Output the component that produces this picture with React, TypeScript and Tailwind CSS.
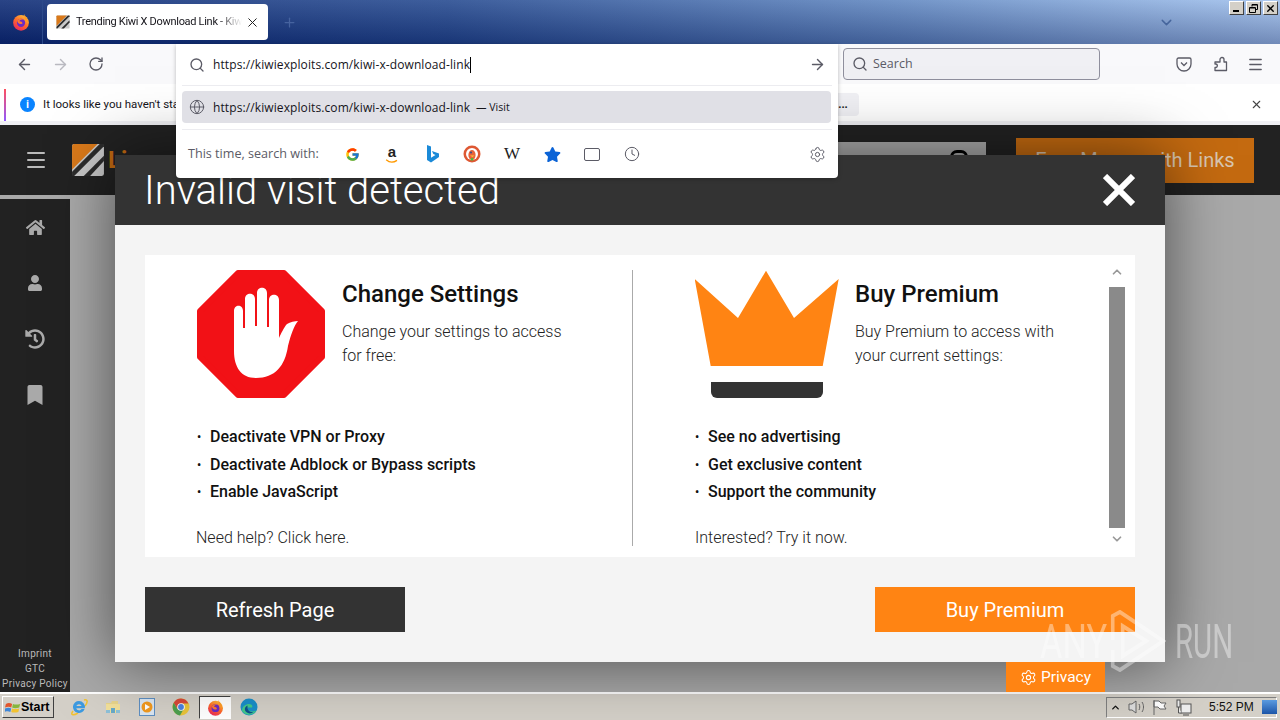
import React from 'react';
import {
  ArrowLeft,
  ArrowRight,
  ChevronDown,
  ChevronUp,
  Clock,
  Globe,
  Menu,
  Plus,
  RotateCw,
  Search,
  Settings,
  X,
} from 'lucide-react';
import { FaBookmark, FaHistory, FaHome, FaUser, FaStar } from 'react-icons/fa';
import { FcGoogle } from 'react-icons/fc';

const uiFont = "font-['Open_Sans','Noto_Sans',sans-serif]";

const FirefoxLogo = ({ size = 18 }: { size?: number }) => (
  <svg width={size} height={size} viewBox="0 0 24 24">
    <defs>
      <linearGradient id="ffg" x1="0.8" y1="0" x2="0.2" y2="1">
        <stop offset="0" stopColor="#ffc53a" />
        <stop offset="0.5" stopColor="#ff6a2a" />
        <stop offset="1" stopColor="#e8215f" />
      </linearGradient>
    </defs>
    <circle cx="12" cy="13" r="10.5" fill="url(#ffg)" />
    <path d="M16 1c1 3 3 4 5 8l1 5-5-4z" fill="#ff9a26" />
    <circle cx="12" cy="13" r="5.5" fill="#6a2bc4" />
    <path d="M7 10c2-3 7-3 9-1-3-1-6 0-6 2 2 0 4 1 4 3-3 2-7 0-7-4z" fill="#ff7a2e" />
  </svg>
);

const KiwiLogo = ({ size = 14 }: { size?: number }) => (
  <svg width={size} height={size} viewBox="0 0 32 32">
    <rect x="1" y="1" width="30" height="30" rx="2" fill="#c9c9c9" />
    <path d="M1 3a2 2 0 0 1 2-2h22L1 25z" fill="#d9791a" />
    <path d="M1 27 27 1h4v2L3 31H1z" fill="#2c2c2c" />
    <path d="M12 31 31 12v5L18 31z" fill="#2c2c2c" />
  </svg>
);

const Bing = () => (
  <svg width="16" height="20" viewBox="0 0 16 20">
    <path d="M3 1l4 1.500v11.200l4.500-2.600-2.200-1L8 7l7 2.500V13L7 18.500 3 16z" fill="#1b8ad8" />
  </svg>
);

const Duck = () => (
  <svg width="18" height="18" viewBox="0 0 18 18">
    <circle cx="9" cy="9" r="8.500" fill="#de5833" />
    <circle cx="9" cy="9" r="6" fill="#fff" />
    <ellipse cx="9" cy="10" rx="3.600" ry="5" fill="#e8623a" />
    <circle cx="8" cy="7.500" r="1" fill="#2d4f8e" />
    <path d="M7 10.500h4.500L9.500 12z" fill="#fc3" />
    <path d="M8 13l2 0 .5 2.500h-3z" fill="#4cba3c" />
  </svg>
);

const Amazon = () => (
  <span className="relative flex h-[20px] w-[16px] flex-col items-center">
    <span className="font-['Liberation_Sans',sans-serif] text-[15px] leading-[15px] font-bold text-[#222]">a</span>
    <svg width="16" height="6" viewBox="0 0 16 6">
      <path d="M1 1c4 3.400 9 3.400 13 .6" stroke="#f90" strokeWidth="1.600" fill="none" />
    </svg>
  </span>
);

const IeIcon = () => (
  <svg width="18" height="18" viewBox="0 0 18 18">
    <path d="M3 13C0 17 3 18 8 15M14 2c4-1 4 2 1 6" stroke="#f2c230" strokeWidth="1.500" fill="none" />
    <path d="M9 3a6 6 0 1 0 5.600 8h-3a3 3 0 0 1-5.400-.8h8.600A6 6 0 0 0 9 3zM6.300 8a3 3 0 0 1 5.400 0z" fill="#3d9ae0" />
  </svg>
);

const FolderIcon = () => (
  <svg width="16" height="16" viewBox="0 0 16 16">
    <path d="M1 4h5l1-2h6v3H1z" fill="#e8d48a" />
    <rect x="1" y="5" width="14" height="9" fill="#f2e09a" />
    <path d="M6 14V9h4v5z" fill="#67a9c9" />
    <path d="M1 11h4v3H1zM11 11h4v3h-4z" fill="#8cc0d8" />
  </svg>
);

const MediaIcon = () => (
  <svg width="16" height="18" viewBox="0 0 16 18">
    <rect x="0.500" y="0.500" width="15" height="17" fill="#dbe7f3" stroke="#5e8fc2" />
    <circle cx="8" cy="9" r="5.500" fill="#f29a1f" />
    <path d="M6 6l5 3-5 3z" fill="#fff" />
  </svg>
);

const ChromeIcon = () => (
  <svg width="18" height="18" viewBox="0 0 18 18">
    <circle cx="9" cy="9" r="8.500" fill="#e9c43a" />
    <path d="M9 .5A8.500 8.500 0 0 0 1.700 4.800L5.500 11 9 5.500h7.400A8.500 8.500 0 0 0 9 .5z" fill="#d8483a" />
    <path d="M1.700 4.800A8.500 8.500 0 0 0 8 17.400L11.700 11H5.500z" fill="#4d9f4f" />
    <circle cx="9" cy="9" r="3.800" fill="#fff" />
    <circle cx="9" cy="9" r="2.900" fill="#4a82e0" />
  </svg>
);

const EdgeIcon = () => (
  <svg width="18" height="18" viewBox="0 0 18 18">
    <circle cx="9" cy="9" r="8.500" fill="#1a8fc9" />
    <path d="M2 13C2 8 6 6 9 6c3 0 4 2 3 3.400H7.500C7 12.500 11 15 16.400 12.600A8.500 8.500 0 0 1 2 13z" fill="#43c98a" />
    <path d="M7.500 9.400c0 3 3 5.500 6 4.400-3 3-8 1.400-8.600-2-.3-2 .8-3.600 2.600-4.400z" fill="#0c4f8e" />
  </svg>
);

const WinFlag = () => (
  <svg width="16" height="15" viewBox="0 0 18 16" className="shrink-0">
    <path d="M1 4c3-2 5-1 7 0L7 8C5 7 3 7 0 8z" fill="#e2562d" />
    <path d="M9 4c2 1 5 1 8 0l-1 4c-3 1-6 1-8 0z" fill="#86b63c" />
    <path d="M0 9c3-1 5-1 7 0l-1 4c-2-1-4-1-7 0z" fill="#3d86d8" />
    <path d="M8 9c2 1 5 1 8 0l-1 4c-3 1-6 1-8 0z" fill="#f2c230" />
  </svg>
);

const WinButton = ({ kind }: { kind: 'min' | 'max' | 'close' }) => (
  <div className="flex h-[14px] w-[15px] items-center justify-center border border-t-white border-l-white border-r-[#404040] border-b-[#404040] bg-[#d4d0c8]">
    {kind === 'min' && <div className="mt-[6px] mr-[2px] h-[2px] w-[6px] bg-black" />}
    {kind === 'max' && (
      <svg width="9" height="9" viewBox="0 0 9 9" fill="none" stroke="#000">
        <path d="M3 2.500V.5h5.500v5H6.500M.5 3.500h6v5h-6z" />
        <path d="M3 1h5M1 4h5" />
      </svg>
    )}
    {kind === 'close' && <X size={11} strokeWidth={3} color="#000" />}
  </div>
);

const HandSign = () => (
  <svg width="128" height="128" viewBox="197 270 128 128">
    <path d="M238 273h46l38 38v46l-38 38h-46l-38-38v-46z" fill="#f21116" stroke="#f21116" strokeWidth="6" strokeLinejoin="round" />
    <path
      d="M234 311c0-7 9-7 9 0v17h2v-29c0-7 10-7 10 0v27h2v-33c0-7 10-7 10 0v34h2v-27c0-7 10-7 10 0v38c2-4 5-11 8-14 3-2 8-3 11-3-4 5-7 13-10 25-3 20-13 32-32 32-15 0-22-11-22-27z"
      fill="#fff"
    />
  </svg>
);

const Crown = () => (
  <svg width="144" height="128" viewBox="695 270 144 128">
    <path d="M694.700 279L738 318 766 270.700 794 318 838.700 279 822.700 366H710.700z" fill="#ff8413" />
    <path d="M711 382h112v10a6 6 0 0 1-6 6H717a6 6 0 0 1-6-6z" fill="#333" />
  </svg>
);

const SideIcon = ({ children }: { children: React.ReactNode }) => (
  <div className="flex h-[56px] items-center justify-center text-[#aaa]">{children}</div>
);

const Bullet = ({ children }: { children: React.ReactNode }) => (
  <li className="flex h-[27.5px] items-center text-[16px] font-medium text-[#111]">
    <span className="w-[13px] text-[12px]">•</span>
    {children}
  </li>
);

const UrlText = () => (
  <span className="text-[12px] tracking-[0.1px] whitespace-nowrap text-[#15141a]">https://kiwiexploits.com/kiwi-x-download-link</span>
);

function PageBehind() {
  return (
    <div className="relative flex min-h-0 flex-1 flex-col bg-[#a9a9a9] font-['Roboto',sans-serif]">
      <div className="flex h-[70px] shrink-0 items-center bg-[#222]">
        <div className="flex w-[71px] justify-center">
          <Menu size={24} color="#bbb" />
        </div>
        <KiwiLogo size={34} />
        <span className="ml-[3px] text-[24px] font-bold text-[#c46a10]">Li</span>
        <div className="mb-[20px] ml-auto flex h-[17px] w-[148px] justify-end bg-[#aaa] pr-[18px]">
          <div className="mt-[8px] h-[14px] w-[18px] rounded-full border-[3px] border-black" />
        </div>
        <div className="mr-[26px] ml-[30px] flex h-[45px] w-[238px] items-center justify-center bg-[#c46a10] text-[20px] text-[#d9c6b0]">
          Earn Money with Links
        </div>
      </div>
      <div className="mt-[4px] flex min-h-0 flex-1">
        <div className="flex w-[70px] flex-col bg-[#222]">
          <SideIcon>
            <FaHome size={19} />
          </SideIcon>
          <SideIcon>
            <FaUser size={16} />
          </SideIcon>
          <SideIcon>
            <FaHistory size={20} />
          </SideIcon>
          <SideIcon>
            <FaBookmark size={20} />
          </SideIcon>
          <div className="mt-auto flex flex-col items-center pb-[1px] text-[10px] leading-[15px] tracking-[0.3px] whitespace-nowrap text-[#bbb]">
            <span>Imprint</span>
            <span>GTC</span>
            <span>Privacy Policy</span>
          </div>
        </div>
      </div>

      {/* modal over the page */}
      <div className="absolute top-[30px] left-[115px] flex h-[507px] w-[1050px] flex-col bg-[#f4f4f4] shadow-[0_0_60px_rgba(0,0,0,0.55)]">
        <div className="flex h-[70px] shrink-0 items-center justify-between bg-[#333] px-[30px]">
          <span className="mt-[2px] -ml-[1px] text-[40px] font-light text-white">Invalid visit detected</span>
          <svg width="32" height="32" viewBox="0 0 32 32" stroke="#fff" strokeWidth="6">
            <path d="M2 2l28 28M30 2L2 30" />
          </svg>
        </div>
        <div className="mx-[30px] mt-[30px] flex h-[302px] bg-white pt-[15px]">
          <div className="h-[276px] w-[488px] border-r border-[#aaa] pl-[52px]">
            <div className="flex h-[128px] gap-[17px]">
              <HandSign />
              <div className="pt-[6px]">
                <div className="text-[24px] leading-[36px] font-medium text-[#111]">Change Settings</div>
                <p className="mt-[8px] w-[240px] text-[16px] leading-[24px] font-light text-[#222]">
                  Change your settings to access for free:
                </p>
              </div>
            </div>
            <ul className="mt-[25.5px]">
              <Bullet>Deactivate VPN or Proxy</Bullet>
              <Bullet>Deactivate Adblock or Bypass scripts</Bullet>
              <Bullet>Enable JavaScript</Bullet>
            </ul>
            <p className="mt-[19.5px] -ml-[1px] text-[16px] leading-[24px] font-light text-[#222]">Need help? Click here.</p>
          </div>
          <div className="h-[276px] flex-1 pl-[62px]">
            <div className="flex h-[128px] gap-[16px]">
              <Crown />
              <div className="pt-[6px]">
                <div className="text-[24px] leading-[36px] font-medium text-[#111]">Buy Premium</div>
                <p className="mt-[8px] w-[220px] text-[16px] leading-[24px] font-light text-[#222]">
                  Buy Premium to access with your current settings:
                </p>
              </div>
            </div>
            <ul className="mt-[25.5px]">
              <Bullet>See no advertising</Bullet>
              <Bullet>Get exclusive content</Bullet>
              <Bullet>Support the community</Bullet>
            </ul>
            <p className="mt-[19.5px] text-[16px] leading-[24px] font-light text-[#222]">Interested? Try it now.</p>
          </div>
          <div className="mr-[10px] flex h-[280px] w-[16px] flex-col items-center">
            <ChevronUp size={14} strokeWidth={3} color="#999" className="-mt-[5px] mb-[8px]" />
            <div className="h-[241px] w-[16px] shrink-0 bg-[#8a8a8a]" />
            <ChevronDown size={14} strokeWidth={3} color="#999" className="mt-[4px]" />
          </div>
        </div>
        <div className="mx-[30px] mt-[30px] flex justify-between">
          <div className="flex h-[45px] w-[260px] items-center justify-center bg-[#333] text-[20px] text-white">Refresh Page</div>
          <div className="flex h-[45px] w-[260px] items-center justify-center bg-[#ff8413] text-[20px] text-white">Buy Premium</div>
        </div>
      </div>

      <div className="absolute top-[537px] left-[1006px] flex h-[30px] w-[99px] items-center justify-center gap-[4px] bg-[#ff8413] pt-[1px] text-[15.5px] text-white">
        <Settings size={17} strokeWidth={1.5} />
        Privacy
      </div>
    </div>
  );
}

export default function App() {
  return (
    <div className={`relative flex h-[720px] w-[1280px] flex-col overflow-hidden bg-white ${uiFont}`}>
      {/* title bar */}
      <div className="flex h-[44px] shrink-0 items-center bg-[linear-gradient(180deg,rgba(255,255,255,0.12),rgba(0,10,60,0.3)),linear-gradient(90deg,#0c2a75,#23488f_35%,#5f86c0_70%,#a2c2ee)]">
        <div className="flex h-full w-[43px] shrink-0 items-center justify-center border-r border-[#2d4a8a]">
          <FirefoxLogo size={18} />
        </div>
        <div className="ml-[4px] flex h-[36px] w-[221px] shrink-0 items-center rounded-[4px] bg-white px-[9px]">
          <KiwiLogo size={14} />
          <span className="ml-[6px] w-[166px] overflow-hidden font-['Roboto',sans-serif] text-[11px] tracking-[-0.3px] whitespace-nowrap text-[#15141a] [mask-image:linear-gradient(90deg,#000_85%,transparent)]">
            Trending Kiwi X Download Link - Kiwi
          </span>
          <X size={15} strokeWidth={1.6} color="#222" className="mr-[-1px] ml-auto" />
        </div>
        <Plus size={15} color="#46639f" className="ml-[14px]" />
        <ChevronDown size={17} color="#46659c" className="ml-[861px]" />
        <div className="mb-[28px] ml-auto flex gap-[2px] pr-[2px]">
          <WinButton kind="min" />
          <WinButton kind="max" />
          <WinButton kind="close" />
        </div>
      </div>

      {/* toolbar */}
      <div className="flex h-[40px] shrink-0 items-center bg-[#f9f9fb] pr-[15px]">
        <ArrowLeft size={17} color="#5b5b66" className="ml-[16px]" />
        <ArrowRight size={17} color="#b9b9c0" className="ml-[19px]" />
        <RotateCw size={16} color="#5b5b66" className="ml-[19px]" />
        <div className="ml-[739px] flex h-[32px] w-[257px] items-center rounded-[4px] border border-[#8f8f9d] bg-[#f0f0f4] pl-[8px]">
          <Search size={16} color="#5b5b66" />
          <span className="ml-[5px] pt-[1px] text-[12.5px] text-[#5b5b66]">Search</span>
        </div>
        <svg width="16" height="16" viewBox="0 0 16 16" fill="none" stroke="#5b5b66" strokeWidth="1.300" className="ml-[76px]">
          <path d="M2.500 2h11c.8 0 1.500.7 1.500 1.500V8a7 7 0 0 1-14 0V3.500C1 2.700 1.700 2 2.500 2z" />
          <path d="M5 6.500l3 3 3-3" />
        </svg>
        <svg width="16" height="16" viewBox="0 0 16 16" fill="none" stroke="#5b5b66" strokeWidth="1.300" strokeLinejoin="round" className="ml-[20px]">
          <path d="M8 6V3.500a2 2 0 0 1 4 0V6h2.500v8.500H3v-3h1a1.800 1.800 0 0 0 0-3.500H3V6z" />
        </svg>
        <Menu size={17} color="#5b5b66" className="ml-[19px]" />
      </div>

      {/* notification bar */}
      <div className="mt-[4px] ml-[4px] flex h-[33px] w-[1271px] shrink-0 items-center rounded-[4px] bg-white">
        <div className="h-[32px] w-[2px] bg-[linear-gradient(180deg,#ff4f5e,#9059ff)]" />
        <div className="ml-[14px] flex h-[15px] w-[15px] items-center justify-center rounded-full bg-[#0a84ff] text-[10px] font-bold text-white">i</div>
        <span className="ml-[8px] font-['Roboto',sans-serif] text-[11.5px] whitespace-nowrap text-[#15141a]">It looks like you haven't sta</span>
        <div className="ml-auto flex h-[23px] w-[32px] items-center justify-center rounded-[4px] bg-[#f0f0f4] text-[11px] font-bold text-[#222]">
          ...
        </div>
        <X size={13} color="#444" className="mr-[12px] ml-[391px]" />
      </div>
      <div className="h-[4px] shrink-0 bg-[#f0f0f4]" />

      <PageBehind />

      {/* taskbar */}
      <div className="flex h-[28px] shrink-0 items-center border-t-2 border-white bg-[#d4d0c8] font-['Liberation_Sans',sans-serif]">
        <div className="ml-[2px] flex h-[22px] w-[52px] items-center border border-t-white border-l-white border-r-[#404040] border-b-[#404040] pl-[2px] text-[12.5px] font-bold text-black">
          <WinFlag />
          <span>Start</span>
        </div>
        <div className="ml-[8px] flex items-center">
          <div className="flex w-[34px] justify-center"><IeIcon /></div>
          <div className="flex w-[34px] justify-center"><FolderIcon /></div>
          <div className="flex w-[34px] justify-center"><MediaIcon /></div>
          <div className="flex w-[34px] justify-center"><ChromeIcon /></div>
          <div className="mx-[1px] flex h-[23px] w-[32px] items-center justify-center border border-t-[#404040] border-l-[#404040] border-r-white border-b-white bg-white">
            <FirefoxLogo size={17} />
          </div>
          <div className="flex w-[34px] justify-center"><EdgeIcon /></div>
        </div>
        <div className="mr-[3px] ml-auto flex h-[21px] w-[171px] items-center border border-t-[#808080] border-l-[#808080] border-r-white border-b-white pl-[3px] text-[12px] whitespace-nowrap text-[#111]">
          <ChevronUp size={11} strokeWidth={3} color="#111" className="shrink-0" />
          <svg width="18" height="16" viewBox="0 0 18 16" className="ml-[7px] shrink-0" fill="none" stroke="#666">
            <path d="M1 5h3l4-3v12l-4-3H1z" fill="#ddd" />
            <path d="M11 5c1 2 1 4 0 6M14 3c2 3 2 7 0 10" />
          </svg>
          <svg width="16" height="17" viewBox="0 0 16 17" className="ml-[6px] shrink-0" fill="#fff" stroke="#666">
            <path d="M2 1v15M2 2h5l2 2h5l-2 3 2 3H8L6 8H2z" />
          </svg>
          <svg width="16" height="17" viewBox="0 0 16 17" className="ml-[8px] shrink-0" fill="#eee" stroke="#555">
            <rect x="5" y="5" width="10" height="9" />
            <rect x="1" y="1" width="3" height="7" />
            <path d="M2.500 8v6h3M7 16h6" />
          </svg>
          <span className="ml-[17px] w-[40px] shrink-0">5:52 PM</span>
          <div className="ml-[13px] h-[14px] w-[15px] shrink-0 bg-[linear-gradient(180deg,#5a9be0,#1c55a8)]" />
        </div>
      </div>

      {/* url dropdown, open over the toolbar */}
      <div className="absolute top-[44px] left-[176px] h-[134px] w-[662px] rounded-b-[4px] bg-white shadow-[0_1px_4px_rgba(0,0,0,0.25)]">
        <div className="mx-[6px] flex h-[42px] items-center border-b border-[#ececf0] pr-[6px] pl-[7px]">
          <Search size={16} color="#5b5b66" className="mr-[8px]" />
          <UrlText />
          <div className="h-[16px] w-px bg-black" />
          <ArrowRight size={17} color="#5b5b66" className="ml-auto" />
        </div>
        <div className="mt-[5px] mr-[7px] ml-[6px] flex h-[32px] items-center rounded-[4px] bg-[#e0e0e6] pl-[7px]">
          <Globe size={16} strokeWidth={1.5} color="#5b5b66" />
          <span className="ml-[8px] flex items-center pt-[1px]">
            <UrlText />
            <span className="ml-[6px] text-[10.5px] text-[#15141a]">— Visit</span>
          </span>
        </div>
        <div className="mx-[6px] mt-[6px] flex h-[49px] items-center border-t border-[#ececf0] px-[6px] text-[12.6px] text-[#5b5b66]">
          <span className="w-[144px] whitespace-nowrap">This time, search with:</span>
          <div className="flex items-center">
            <div className="flex w-[40px] justify-center"><FcGoogle size={15} /></div>
            <div className="flex w-[40px] justify-center"><Amazon /></div>
            <div className="flex w-[40px] justify-center"><Bing /></div>
            <div className="flex w-[40px] justify-center"><Duck /></div>
            <div className="flex w-[40px] justify-center font-['Liberation_Serif',serif] text-[17px] text-[#222]">W</div>
            <div className="flex w-[40px] justify-center"><FaStar size={17} color="#0b63d6" /></div>
            <div className="flex w-[40px] justify-center">
              <div className="h-[13px] w-[16px] rounded-[2px] border-[1.5px] border-[#5b5b66]" />
            </div>
            <div className="flex w-[40px] justify-center"><Clock size={16} strokeWidth={1.5} color="#5b5b66" /></div>
          </div>
          <Settings size={17} strokeWidth={1.4} color="#5b5b66" className="ml-auto" />
        </div>
      </div>

      {/* ANY.RUN watermark */}
      <div className="pointer-events-none absolute top-[610px] left-[1040px] flex h-[62px] items-center text-white/40">
        <span className="w-[70px] origin-left scale-x-[0.7] font-['Roboto',sans-serif] text-[49px] leading-none font-normal">ANY</span>
        <svg width="56" height="62" viewBox="0 0 62 62" preserveAspectRatio="none" fill="none" stroke="currentColor" strokeWidth="4">
          <path d="M3 30V6l8-4 48 29-48 29-8-4V40" />
          <path d="M14 16l26 15-26 15z" />
        </svg>
        <span className="ml-[9px] w-[56px] origin-left scale-x-[0.6] font-['Roboto',sans-serif] text-[49px] leading-none font-normal">RUN</span>
      </div>
    </div>
  );
}
